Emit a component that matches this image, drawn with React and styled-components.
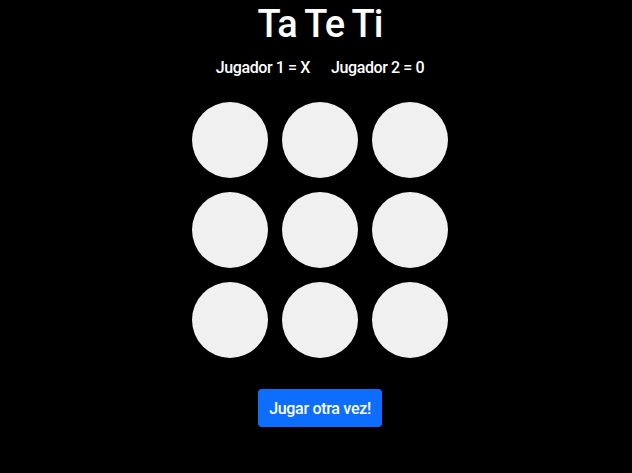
import styled, {createGlobalStyle} from "styled-components";

const GlobalStyle = createGlobalStyle`
  body {
    margin: 0;
    background: #000;
    font-family: Roboto, "Liberation Sans", sans-serif;
    color: #fff;
  }
`;

const Container = styled.div`
  display: flex;
  flex-direction: column;
  align-items: center;
  padding: 4px 0 0 8px;
`;

const Title = styled.h1`
  margin: 0;
  font-size: 38px;
  font-weight: 500;
  line-height: 40px;
  letter-spacing: -1px;
`;

const Players = styled.div`
  display: flex;
  gap: 21px;
  margin-top: 14px;
  font-size: 16px;
  font-weight: 500;
  line-height: 20px;
  letter-spacing: -0.4px;
`;

const Board = styled.div`
  display: grid;
  grid-template-columns: repeat(3, 76px);
  gap: 14px;
  margin-top: 24px;
`;

const Cell = styled.button`
  width: 76px;
  height: 76px;
  border: none;
  border-radius: 50%;
  background: #f0f0f0;
  padding: 0;
  cursor: pointer;
`;

const Button = styled.button`
  margin-top: 31px;
  width: 124px;
  height: 38px;
  border: none;
  border-radius: 4px;
  background-color: #0d6efd;
  color: white;
  font-family: inherit;
  font-size: 16px;
  font-weight: 500;
  letter-spacing: -0.3px;
  cursor: pointer;
`;

const App = () => {
    const cells = Array(9).fill(null);
    return (
        <Container>
            <GlobalStyle/>
            <Title>Ta Te Ti</Title>
            <Players>
                <span>Jugador 1 = X</span>
                <span>Jugador 2 = 0</span>
            </Players>
            <Board>
                {cells.map((c, i) => <Cell key={i}/>)}
            </Board>
            <Button>Jugar otra vez!</Button>
        </Container>
    );
};

export default App;
